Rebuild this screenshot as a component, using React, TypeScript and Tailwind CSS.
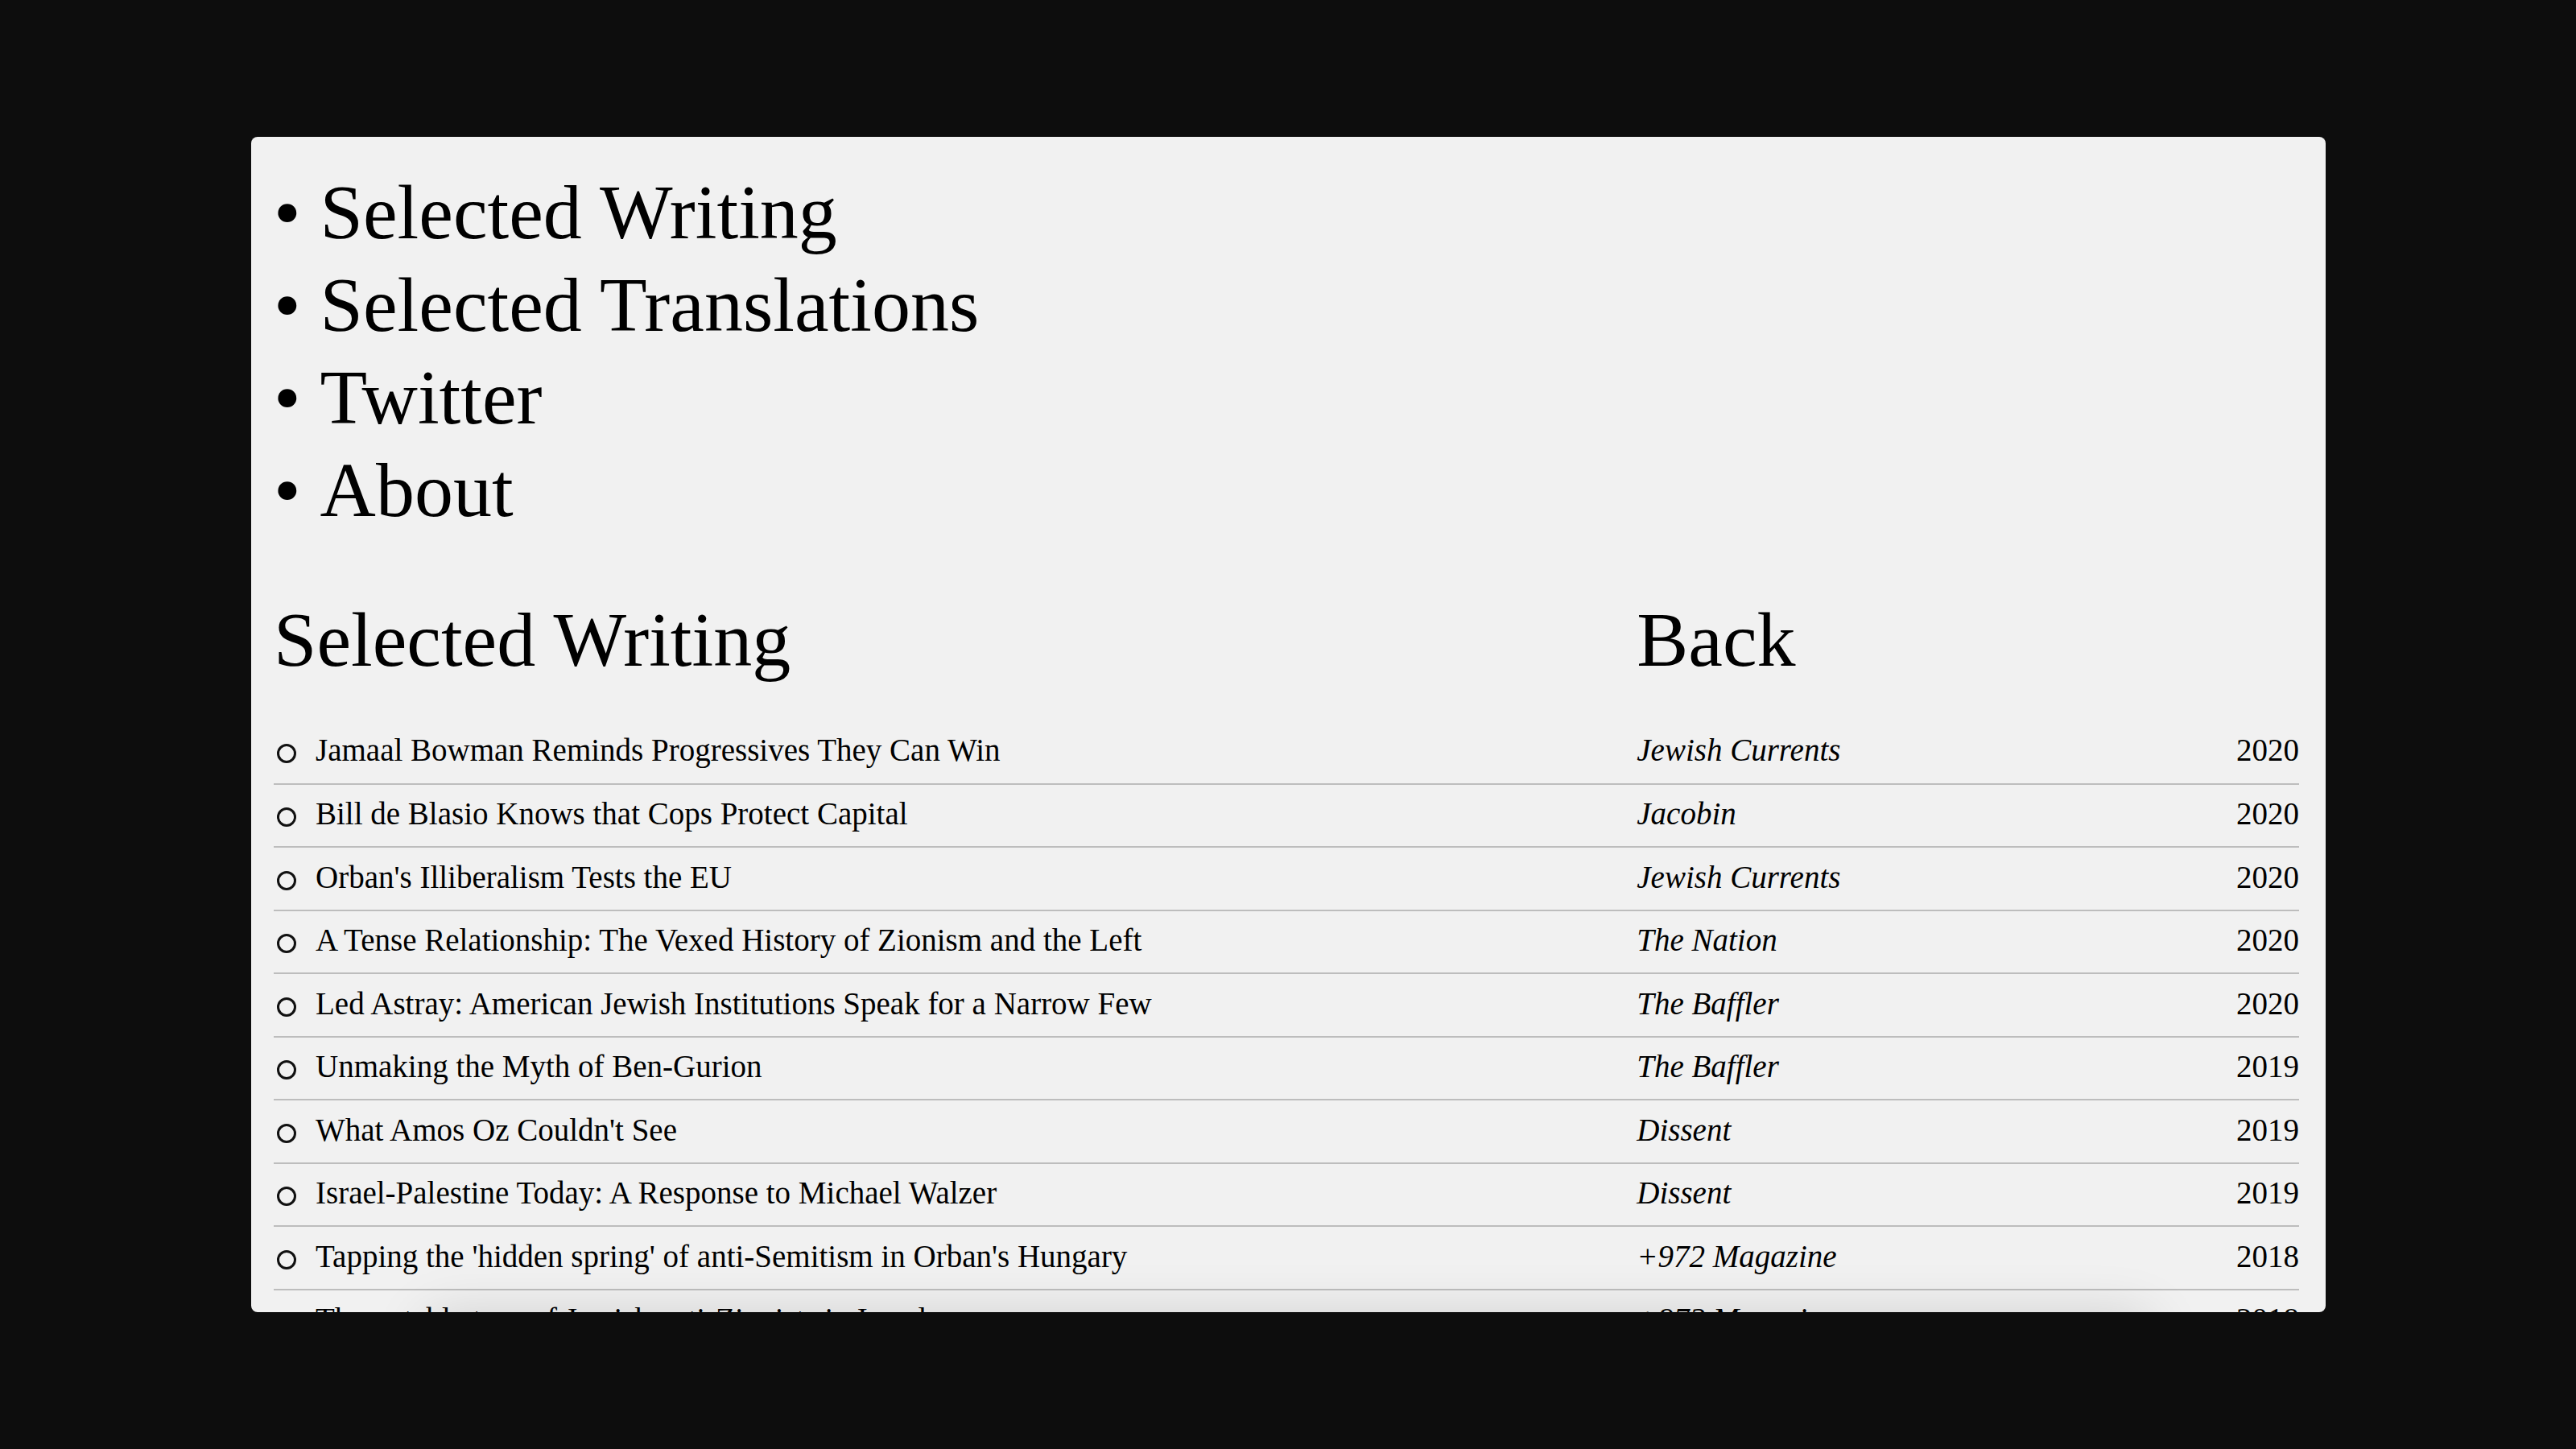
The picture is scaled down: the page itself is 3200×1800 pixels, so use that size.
type Article = { title: string; publication: string; year: number };

const menu = ["Selected Writing", "Selected Translations", "Twitter", "About"];

const articles: Article[] = [
  { title: "Jamaal Bowman Reminds Progressives They Can Win", publication: "Jewish Currents", year: 2020 },
  { title: "Bill de Blasio Knows that Cops Protect Capital", publication: "Jacobin", year: 2020 },
  { title: "Orban's Illiberalism Tests the EU", publication: "Jewish Currents", year: 2020 },
  { title: "A Tense Relationship: The Vexed History of Zionism and the Left", publication: "The Nation", year: 2020 },
  { title: "Led Astray: American Jewish Institutions Speak for a Narrow Few", publication: "The Baffler", year: 2020 },
  { title: "Unmaking the Myth of Ben-Gurion", publication: "The Baffler", year: 2019 },
  { title: "What Amos Oz Couldn't See", publication: "Dissent", year: 2019 },
  { title: "Israel-Palestine Today: A Response to Michael Walzer", publication: "Dissent", year: 2019 },
  { title: "Tapping the 'hidden spring' of anti-Semitism in Orban's Hungary", publication: "+972 Magazine", year: 2018 },
  { title: "The notable turn of Jewish anti-Zionists in Israel", publication: "+972 Magazine", year: 2018 },
];

function Menu() {
  return (
    <nav>
      <ul className="text-[96px] leading-[115px]">
        {menu.map((item) => (
          <li key={item} className="flex gap-6">
            <span>•</span>
            <a href="#">{item}</a>
          </li>
        ))}
      </ul>
    </nav>
  );
}

function ArticleRow({ title, publication, year }: Article) {
  return (
    <tr className="border-b-2 border-[#bdbdbd] odd:h-[79px] even:h-[78px]">
      <td className="w-[67.3%] p-0 pb-1">
        <a href="#" className="flex items-center gap-6 pl-1">
          <span className="mt-2 size-6 shrink-0 rounded-full border-3 border-[#111111]" />
          {title}
        </a>
      </td>
      <td className="p-0 pb-1 italic">{publication}</td>
      <td className="p-0 pb-1 text-right">{year}</td>
    </tr>
  );
}

export default function App() {
  return (
    <div className="flex h-screen bg-[#0d0d0d] py-[170px] pr-[311px] pl-[312px] font-['Liberation_Serif',serif] text-black">
      <main className="relative flex-1 overflow-hidden rounded-lg bg-[#f1f1f1] pt-9 pr-[33px] pl-7">
        <Menu />
        <header className="mt-[71px] flex text-[96px] leading-[115px]">
          <h1 className="w-[67.3%]">Selected Writing</h1>
          <a href="#">Back</a>
        </header>
        <table className="mt-[43px] w-full border-collapse text-[39px] leading-[48px]">
          <tbody>
            {articles.map((article) => (
              <ArticleRow key={article.title} {...article} />
            ))}
          </tbody>
        </table>
        <div className="pointer-events-none absolute inset-x-[220px] top-full h-20 shadow-[0_8px_70px_rgba(0,0,0,0.16)]" />
      </main>
    </div>
  );
}
